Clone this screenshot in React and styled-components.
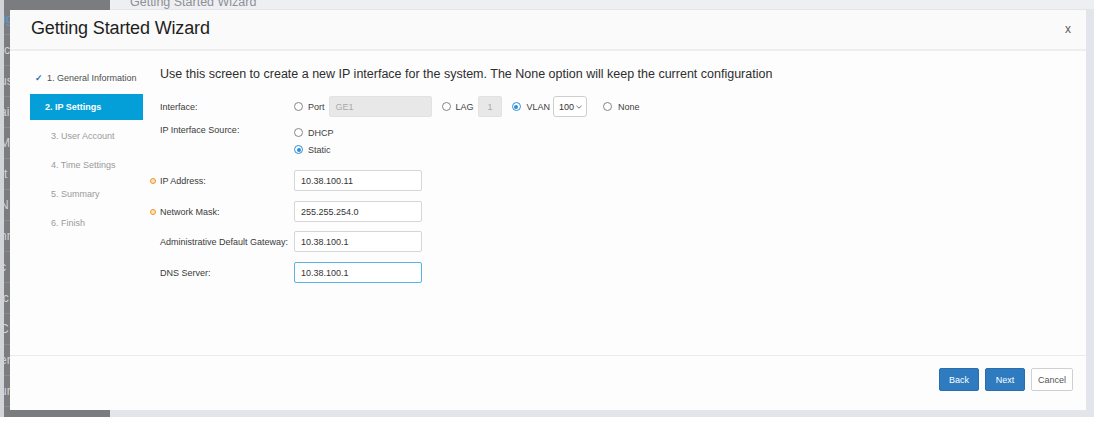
import React from "react";
import styled, { createGlobalStyle } from "styled-components";

const GlobalStyle = createGlobalStyle`
  html, body { margin: 0; padding: 0; background: #ffffff; }
  body { font-family: "Liberation Sans", Arial, sans-serif; }
  * { box-sizing: border-box; }
`;

const Page = styled.div`
  position: relative;
  width: 1094px;
  height: 417px;
  display: flex;
  overflow: hidden;
`;

const Sidebar = styled.div`
  width: 110px;
  flex: 0 0 110px;
  background: #7b7c80;
  border-left: 4px solid #d3d4d7;
  padding-top: 4px;
  display: flex;
  flex-direction: column;
  overflow: hidden;
`;

const SideItem = styled.div`
  height: 31px;
  flex: 0 0 31px;
  display: flex;
  align-items: center;
  border-bottom: 1px solid #8a8b8f;
  font-size: 12px;
  margin-left: -4px;
  color: ${(p) => (p.$active ? "#5a9ad6" : "#d2d3d6")};
  white-space: nowrap;
`;

const Main = styled.div`
  flex: 1;
  background: #e3e5ea;
  display: flex;
  flex-direction: column;
`;

const PageHeading = styled.div`
  height: 9px;
  background: #eeeff2;
  overflow: hidden;
  padding-left: 20px;
`;

const PageHeadingText = styled.div`
  font-size: 12.5px;
  line-height: 14px;
  color: #8d8f94;
  margin-top: -5px;
`;

const Modal = styled.div`
  position: absolute;
  left: 10px;
  top: 10px;
  width: 1076px;
  height: 400px;
  background: #fdfdfd;
  display: flex;
  flex-direction: column;
`;

const Header = styled.div`
  height: 41px;
  flex: 0 0 41px;
  display: flex;
  align-items: center;
  justify-content: space-between;
  padding: 0 15px 2px 21px;
  border-bottom: 2px solid #eeeeee;
  background: #fafafa;
`;

const Title = styled.h1`
  margin: 0;
  font-size: 18px;
  font-weight: normal;
  color: #1e1e1e;
  letter-spacing: -0.15px;
`;

const Close = styled.span`
  font-size: 12px;
  color: #5a5a5a;
`;

const Body = styled.div`
  flex: 1;
  display: flex;
  border-bottom: 1px solid #ececec;
`;

const Nav = styled.div`
  width: 113px;
  margin-left: 20px;
  padding-top: 14px;
  display: flex;
  flex-direction: column;
  gap: 3px;
`;

const NavItem = styled.div`
  height: 26px;
  display: flex;
  align-items: center;
  font-size: 9px;
  white-space: nowrap;
  padding-left: ${(p) => (p.$state === "active" ? "15px" : p.$state === "done" ? "5px" : "21px")};
  background: ${(p) => (p.$state === "active" ? "#049fd9" : "transparent")};
  color: ${(p) => (p.$state === "active" ? "#ffffff" : p.$state === "done" ? "#4f4f4f" : "#9a9a9a")};
  font-weight: ${(p) => (p.$state === "active" ? "bold" : "normal")};
`;

const Check = styled.span`
  color: #1d6fb8;
  font-size: 9px;
  margin-right: 4px;
  font-weight: bold;
`;

const Content = styled.div`
  margin-left: 17px;
  padding-top: 15px;
  display: flex;
  flex-direction: column;
`;

const Intro = styled.p`
  margin: 0;
  font-size: 12.5px;
  line-height: 16px;
  color: #2e2e2e;
`;

const FieldRow = styled.div`
  display: flex;
  align-items: ${(p) => (p.$top ? "flex-start" : "center")};
  margin-top: ${(p) => p.$mt}px;
`;

const Label = styled.div`
  width: 134px;
  flex: 0 0 134px;
  display: flex;
  align-items: center;
  font-size: 9px;
  line-height: 12px;
  color: #3a3a3a;
  white-space: nowrap;
`;

const Required = styled.span`
  width: 6px;
  height: 6px;
  border-radius: 50%;
  border: 1.5px solid #f29422;
  background: #fde2bd;
  margin-left: -10px;
  margin-right: 4px;
`;

const Controls = styled.div`
  display: flex;
  align-items: center;
`;

const Stack = styled.div`
  display: flex;
  flex-direction: column;
`;

const Option = styled.label`
  display: inline-flex;
  align-items: center;
  height: ${(p) => (p.$h ? p.$h : 21)}px;
  font-size: 9px;
  color: #404040;
  margin-left: ${(p) => p.$ml || 0}px;
`;

const Radio = styled.span`
  width: 9px;
  height: 9px;
  border-radius: 50%;
  border: 1px solid ${(p) => (p.$checked ? "#2b8fd6" : "#858585")};
  background: #fff;
  margin-right: ${(p) => p.$gap || 5}px;
  display: inline-flex;
  align-items: center;
  justify-content: center;
  &::after {
    content: "";
    width: 4px;
    height: 4px;
    border-radius: 50%;
    background: ${(p) => (p.$checked ? "#2b8fd6" : "transparent")};
  }
`;

const TextBox = styled.div`
  width: ${(p) => p.$w}px;
  height: 21px;
  margin-left: ${(p) => p.$ml || 0}px;
  border: 1px solid ${(p) => (p.$focus ? "#56b4e6" : p.$disabled ? "#e2e2e2" : "#d6d6d6")};
  border-radius: 2px;
  background: ${(p) => (p.$disabled ? "#e8e8e8" : "#ffffff")};
  color: ${(p) => (p.$disabled ? "#aaaaaa" : "#333333")};
  font-size: 9px;
  display: flex;
  align-items: center;
  padding-left: ${(p) => (p.$pl ? p.$pl : 6)}px;
`;

const Select = styled.div`
  width: 34px;
  height: 21px;
  margin-left: 3px;
  border: 1px solid #cfcfcf;
  border-radius: 3px;
  background: #fff;
  font-size: 9px;
  color: #333;
  display: flex;
  align-items: center;
  padding-left: 5px;
  gap: 2px;
`;

const Footer = styled.div`
  flex: 0 0 54px;
  display: flex;
  justify-content: flex-end;
  align-items: flex-start;
  padding: 12px 13px 0 0;
  gap: 6px;
`;

const Button = styled.button`
  height: 23px;
  width: ${(p) => p.$w}px;
  padding: 0;
  border-radius: 2px;
  font-family: inherit;
  font-size: 9px;
  border: 1px solid ${(p) => (p.$primary ? "#2a6fad" : "#d0d0d0")};
  background: ${(p) => (p.$primary ? "#2f7bbf" : "#ffffff")};
  color: ${(p) => (p.$primary ? "#ffffff" : "#555555")};
`;

const sideFragments = ["fig", "rc", "us", "ai", "M", "rt", "N", "nn", "c", "ic", "C", "er", "ur"];

const steps = [
  { label: "1. General Information", state: "done" },
  { label: "2. IP Settings", state: "active" },
  { label: "3. User Account", state: "pending" },
  { label: "4. Time Settings", state: "pending" },
  { label: "5. Summary", state: "pending" },
  { label: "6. Finish", state: "pending" },
];

function Chevron() {
  return (
    <svg width="6" height="4" viewBox="0 0 6 4">
      <path d="M0.5 0.8 L3 3.2 L5.5 0.8" fill="none" stroke="#666" strokeWidth="0.9" />
    </svg>
  );
}

export default function App() {
  return (
    <>
      <GlobalStyle />
      <Page>
        <Sidebar>
          {sideFragments.map((t, i) => (
            <SideItem key={i} $active={i === 0}>
              {t}
            </SideItem>
          ))}
        </Sidebar>
        <Main>
          <PageHeading>
            <PageHeadingText>Getting Started Wizard</PageHeadingText>
          </PageHeading>
        </Main>

        <Modal>
          <Header>
            <Title>Getting Started Wizard</Title>
            <Close>x</Close>
          </Header>
          <Body>
            <Nav>
              {steps.map((s) => (
                <NavItem key={s.label} $state={s.state}>
                  {s.state === "done" && <Check>✓</Check>}
                  {s.label}
                </NavItem>
              ))}
            </Nav>
            <Content>
              <Intro>
                Use this screen to create a new IP interface for the system. The None option will keep the current configuration
              </Intro>

              <FieldRow $mt={14}>
                <Label>Interface:</Label>
                <Controls>
                  <Option>
                    <Radio />
                    Port
                  </Option>
                  <TextBox $w={103} $ml={4} $disabled>
                    GE1
                  </TextBox>
                  <Option $ml={10}>
                    <Radio />
                    LAG
                  </Option>
                  <TextBox $w={24} $ml={4} $disabled $pl={9}>
                    1
                  </TextBox>
                  <Option $ml={10}>
                    <Radio $checked $gap={6} />
                    VLAN
                  </Option>
                  <Select>
                    100
                    <Chevron />
                  </Select>
                  <Option $ml={16}>
                    <Radio $gap={6} />
                    None
                  </Option>
                </Controls>
              </FieldRow>

              <FieldRow $mt={7} $top>
                <Label>IP Interface Source:</Label>
                <Stack>
                  <Option $h={17}>
                    <Radio />
                    DHCP
                  </Option>
                  <Option $h={17}>
                    <Radio $checked />
                    Static
                  </Option>
                </Stack>
              </FieldRow>

              <FieldRow $mt={12}>
                <Label>
                  <Required />
                  IP Address:
                </Label>
                <TextBox $w={128}>10.38.100.11</TextBox>
              </FieldRow>

              <FieldRow $mt={10}>
                <Label>
                  <Required />
                  Network Mask:
                </Label>
                <TextBox $w={128}>255.255.254.0</TextBox>
              </FieldRow>

              <FieldRow $mt={9}>
                <Label>Administrative Default Gateway:</Label>
                <TextBox $w={128}>10.38.100.1</TextBox>
              </FieldRow>

              <FieldRow $mt={10}>
                <Label>DNS Server:</Label>
                <TextBox $w={128} $focus>
                  10.38.100.1
                </TextBox>
              </FieldRow>
            </Content>
          </Body>
          <Footer>
            <Button $primary $w={40}>Back</Button>
            <Button $primary $w={40}>Next</Button>
            <Button $w={42}>Cancel</Button>
          </Footer>
        </Modal>
      </Page>
    </>
  );
}
